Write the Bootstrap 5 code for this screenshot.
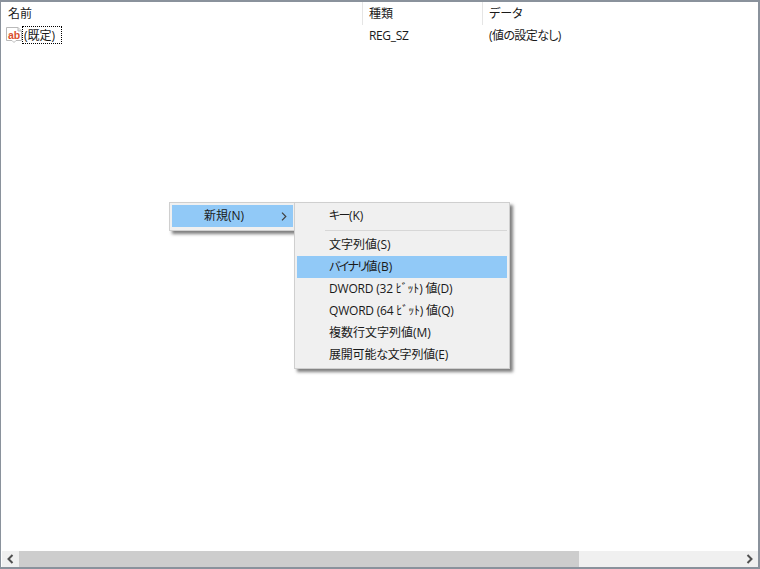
<!DOCTYPE html>
<html lang="ja">
<head>
<meta charset="utf-8">
<title>レジストリ</title>
<link href="https://cdn.jsdelivr.net/npm/bootstrap@5.3.0/dist/css/bootstrap.min.css" rel="stylesheet">
<style>
html,body{height:569px;overflow:hidden;background:#fff}
body{font-family:"Open Sans","Noto Sans CJK JP",sans-serif;font-size:12px;line-height:16px;color:#1a1a1a;font-feature-settings:"palt"}
.reg-window{width:760px;height:569px;border:2px solid #8a929c;border-left-width:1px;border-right-width:2px;background:#fff;position:relative}
.reg-list{min-height:0}
.reg-head{height:23px}
.reg-col-name{width:362px}
.reg-col-type{width:120px}
.reg-head .reg-cell{border-right:1px solid #e5e5e5;padding:4px 0 0 7px;height:23px}
.reg-head .reg-cell+.reg-cell{padding-left:6px}
.reg-head .reg-cell:last-child{border-right:0}
.reg-row{height:20px}
.reg-namecell{padding-left:5px;height:20px}
.reg-icon{margin-top:2px}
.reg-focus{outline:1px dotted #000;outline-offset:-1px;height:18px;width:40px;padding:2px 0 0 2px;white-space:nowrap;margin-top:1px}
.reg-typecell{padding:3px 0 0 6px}
.reg-data{padding:3px 0 0 6px}
.reg-ls1{letter-spacing:-.2px}
.reg-ls2{letter-spacing:-.35px}
.reg-ls3{letter-spacing:-.6px}
.reg-kana{letter-spacing:-1.6px}
.reg-scroll{height:16px;margin:0 0 0 1px;background:#f0f0f0;flex:none}
.reg-sbtn{width:17px;height:16px}
.reg-thumb{width:560px;background:#cdcdcd}
.reg-menu.dropdown-menu{display:block;position:absolute;background:#f0f0f0;border:1px solid #cfcfcf;border-radius:0;padding:2px;margin:0;min-width:0;font-size:12px;color:#1a1a1a;box-shadow:3px 3px 3px #7f7f7f}
.reg-menu1{left:168px;top:200px;width:127px;height:29px}
.reg-menu2{left:293px;top:200px;width:216px;height:167px}
.reg-menu .dropdown-item{height:22px;padding:3px 0 0 32px;color:#1a1a1a;font-size:12px;line-height:16px;white-space:nowrap;background:transparent}
.reg-menu .reg-active{background:#91c9f7}
.reg-menu1 .dropdown-item{padding:3px 6px 0 32px;height:22px;justify-content:space-between}
.reg-menu .dropdown-divider{margin:0 0 0 28px;border-top:1px solid #d7d7d7;opacity:1;height:0}
.reg-menu .reg-sep{height:7px;padding-top:3px}
</style>
</head>
<body>
<div class="reg-window d-flex flex-column">
  <div class="reg-list flex-grow-1">
    <div class="reg-head d-flex">
      <div class="reg-cell reg-col-name">名前</div>
      <div class="reg-cell reg-col-type">種類</div>
      <div class="reg-cell flex-grow-1">データ</div>
    </div>
    <div class="reg-row d-flex">
      <div class="reg-col-name reg-namecell d-flex align-items-start">
        <svg width="16" height="16" viewBox="0 0 16 16" class="flex-shrink-0 reg-icon"><path d="M.5.5H12L15.500 4V13.500H10L8 15.500 6 13.500H.5Z" fill="#fff" stroke="#b9b9b9"/><path d="M12 .5V4H15.500" fill="#e8e8e8" stroke="#b9b9b9"/><text x="2" y="11.500" font-family="Liberation Sans" font-weight="700" font-size="10.500" fill="#d9502e">ab</text></svg>
        <div class="reg-focus">(既定)</div>
      </div>
      <div class="reg-col-type reg-typecell reg-ls2">REG_SZ</div>
      <div class="reg-data reg-ls3">(値の設定なし)</div>
    </div>
  </div>
  <div class="reg-scroll d-flex align-items-stretch">
    <div class="reg-sbtn d-flex align-items-center justify-content-center">
      <svg width="7" height="10" viewBox="0 0 7 10"><path d="M5.500 1 1.500 5l4 4" fill="none" stroke="#505050" stroke-width="2"/></svg>
    </div>
    <div class="reg-thumb"></div>
    <div class="flex-grow-1"></div>
    <div class="reg-sbtn d-flex align-items-center justify-content-center">
      <svg width="7" height="10" viewBox="0 0 7 10"><path d="M1.500 1l4 4-4 4" fill="none" stroke="#505050" stroke-width="2"/></svg>
    </div>
  </div>
  <div class="dropdown-menu reg-menu reg-menu1">
    <div class="dropdown-item reg-active d-flex">
      <span>新規(N)</span>
      <svg width="6" height="9" viewBox="0 0 6 9" class="mt-1"><path d="M1 .7 4.800 4.500 1 8.300" fill="none" stroke="#404040" stroke-width="1.200"/></svg>
    </div>
  </div>
  <div class="dropdown-menu reg-menu reg-menu2">
    <div class="dropdown-item"><span class="reg-kana">キー</span>(K)</div>
    <div class="reg-sep"><hr class="dropdown-divider"></div>
    <div class="dropdown-item">文字列値(S)</div>
    <div class="dropdown-item reg-active"><span class="reg-kana">バイナリ</span>値(B)</div>
    <div class="dropdown-item reg-ls1">DWORD (32 ﾋﾞｯﾄ) 値(D)</div>
    <div class="dropdown-item reg-ls1">QWORD (64 ﾋﾞｯﾄ) 値(Q)</div>
    <div class="dropdown-item">複数行文字列値(M)</div>
    <div class="dropdown-item reg-ls1">展開可能な文字列値(E)</div>
  </div>
</div>
<script src="https://cdn.jsdelivr.net/npm/bootstrap@5.3.0/dist/js/bootstrap.bundle.min.js"></script>
</body>
</html>
